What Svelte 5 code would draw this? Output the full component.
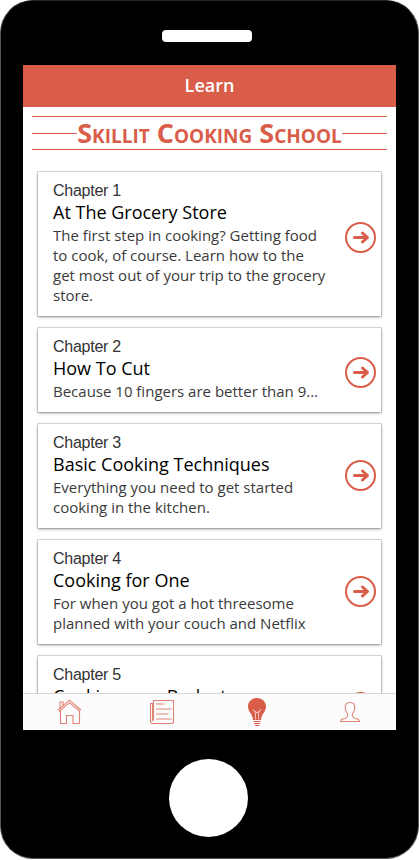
<script>
  const chapters = [
    { n: 1, top: 40, title: 'At The Grocery Store', text: 'The first step in cooking? Getting food\nto cook, of course. Learn how to the\nget most out of your trip to the grocery\nstore.' },
    { n: 2, top: 19, title: 'How To Cut', text: 'Because 10 fingers are better than 9...' },
    { n: 3, top: 26, title: 'Basic Cooking Techniques', text: 'Everything you need to get started\ncooking in the kitchen.' },
    { n: 4, top: 26, title: 'Cooking for One', text: 'For when you got a hot threesome\nplanned with your couch and Netflix' },
    { n: 5, top: 26, title: 'Cooking on a Budget', text: '' }
  ];
</script>

<div class="phone">
  <div class="speaker"></div>
  <div class="screen">
    <header>Learn</header>
    <main>
      <div class="banner">
        <span class="rule"></span>
        <h1>Skillit Cooking School</h1>
        <span class="rule"></span>
      </div>
      <div class="list">
        {#each chapters as c (c.n)}
          <article>
            <div class="copy">
              <div class="chapter">Chapter {c.n}</div>
              <h2>{c.title}</h2>
              {#if c.text}<p>{c.text}</p>{/if}
            </div>
            <svg class="go" style="margin-top: {c.top}px" width="32" height="32" viewBox="0 0 32 32" fill="none" stroke="#d95d49">
              <circle cx="15.500" cy="16.500" r="14.500" stroke-width="2" />
              <path d="M9.500 16.500H22M17.500 12l5 4.500-5 4.500" stroke-width="3" stroke-linecap="round" stroke-linejoin="round" />
            </svg>
          </article>
        {/each}
      </div>
    </main>
    <nav>
      <div class="tab">
        <svg width="26" height="26" viewBox="0 0 26 26" fill="none" stroke="#e08476" stroke-width="1.100">
          <path d="M1 11L12.500 1.200l11.500 9.800M2 12.500L12.500 3.700 23 12.500M3 9V3h3v3.500M3.500 11.500v13h6v-8h6.500v8h6.500V11.500" />
        </svg>
      </div>
      <div class="tab">
        <svg width="26" height="26" viewBox="0 0 26 26" fill="none" stroke="#e08476" stroke-width="1.100">
          <path d="M4.500 21.500V1.500h20v21q0 2-2 2h-18.500q-2.500 0-2.500-2.500V4.500h2V22M7 5h8.500M7 10h15.500M7 15h12.500M7 20h15.500" />
        </svg>
      </div>
      <div class="tab bulb">
        <svg width="22" height="30" viewBox="0 0 22 30" fill="none">
          <path d="M11 1C5.800 1 2 4.700 2 9.500c0 5.500 4.500 7 5 13.500h8c.5-6.500 5-8 5-13.500C20 4.700 16.200 1 11 1z" fill="#d95d49" />
          <path d="M9.500 22.500V16L7 12M12.500 22.500V16l2.500-4M9 14l2 2 2-2" stroke="#f6cdc5" stroke-width=".9" />
          <path d="M7.500 24.500h7M8 26.500h6M9 28.500h4" stroke="#d95d49" />
        </svg>
      </div>
      <div class="tab person">
        <svg width="22" height="22" viewBox="0 0 22 22" fill="none" stroke="#e08476" stroke-width="1.100">
          <path d="M11 1.500c-3.500 0-5.200 2-4.700 5.500.2 3 .9 4.300 2.200 6 .6 2.500-.6 3.900-3 4.500-2.500.5-4 1.300-4 3h19c0-1.700-1.500-2.500-4-3-2.400-.6-3.600-2-3-4.500 1.300-1.700 2-3 2.200-6 .5-3.500-1.200-5.500-4.700-5.500z" />
        </svg>
      </div>
    </nav>
  </div>
  <div class="home"></div>
</div>

<style>
  :global(body) { background: #fff; }
  .phone {
    box-sizing: border-box;
    width: 419px;
    height: 859px;
    background: #000;
    border: 1px solid #555;
    border-top-color: #222;
    border-radius: 33px;
    display: flex;
    flex-direction: column;
    padding: 29px 22px 0;
    overflow: hidden;
  }
  .speaker {
    width: 90px;
    height: 12px;
    margin-left: 139px;
    border-radius: 4px;
    background: #fff;
    flex: none;
  }
  .screen {
    width: 373px;
    height: 665px;
    margin-top: 23px;
    background: #fff;
    display: flex;
    flex-direction: column;
    flex: none;
    font-family: "Open Sans", sans-serif;
  }
  header {
    height: 42px;
    line-height: 41px;
    background: #d95d49;
    color: #fff;
    text-align: center;
    font-size: 18px;
    font-weight: 550;
    flex: none;
  }
  main {
    flex: 1;
    min-height: 0;
    overflow: hidden;
    padding: 9px 9px 0;
  }
  .banner {
    box-sizing: border-box;
    height: 34px;
    border-top: 1px solid #d95d49;
    border-bottom: 1px solid #d95d49;
    display: flex;
    align-items: center;
  }
  .rule { flex: 1; height: 1px; background: #d95d49; }
  h1 {
    margin: 0;
    color: #d95d49;
    font-size: 27px;
    line-height: 32px;
    font-weight: 700;
    font-variant: small-caps;
    white-space: nowrap;
  }
  .list {
    display: flex;
    flex-direction: column;
    gap: 12px;
    padding: 22px 6px 0;
  }
  article {
    box-sizing: border-box;
    display: flex;
    align-items: flex-start;
    justify-content: space-between;
    padding: 9px 4px 10px 15px;
    min-height: 84px;
    background: #fff;
    box-shadow: 0 0 0 1px rgba(0, 0, 0, .12), 0 1px 3px rgba(0, 0, 0, .4);
  }
  .chapter {
    font: 16px/20px "Liberation Sans", Arial, sans-serif;
    letter-spacing: -.25px;
    color: #333;
  }
  h2 {
    margin: -1px 0 0;
    font-size: 18px;
    line-height: 25px;
    font-weight: 400;
    color: #000;
    white-space: nowrap;
  }
  p {
    margin: 0;
    padding-bottom: 1px;
    font-size: 15px;
    line-height: 20px;
    color: #3a3a3a;
    white-space: pre;
  }
  .go { flex: none; }
  nav {
    box-sizing: border-box;
    height: 37px;
    flex: none;
    padding-left: 1px;
    border-top: 1px solid #d6d6d6;
    background: #fcfcfc;
    display: flex;
  }
  .tab {
    flex: 1;
    display: flex;
    align-items: center;
    justify-content: center;
  }
  .bulb { padding-left: 2px; }
  .person { padding-left: 1px; }
  .home {
    width: 79px;
    height: 78px;
    margin: 29px 0 0 146px;
    border-radius: 50%;
    background: #fff;
    flex: none;
  }
</style>
